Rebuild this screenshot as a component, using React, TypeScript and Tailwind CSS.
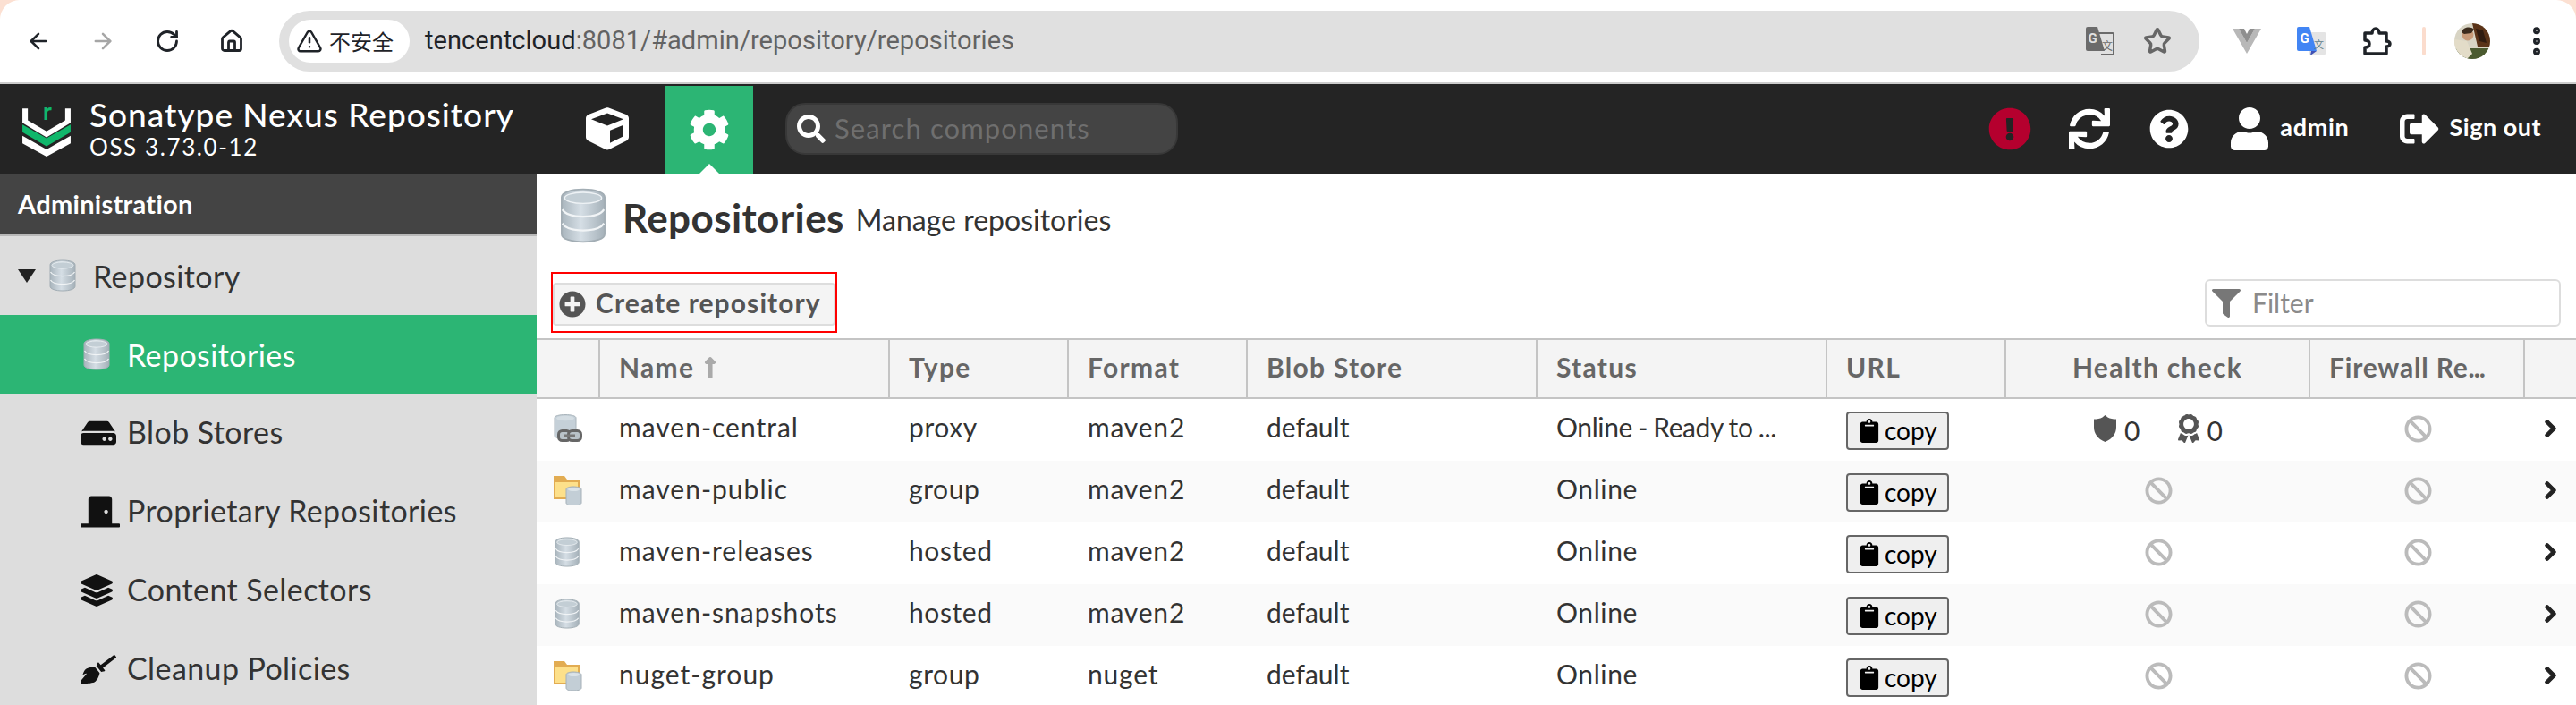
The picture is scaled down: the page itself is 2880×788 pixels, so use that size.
import { useId } from "react";
import { ArrowLeft, ArrowRight, RotateCw, House, TriangleAlert, Star, EllipsisVertical } from "lucide-react";
import {
  FaCube, FaCog, FaSearch, FaExclamationCircle, FaSync, FaQuestionCircle, FaUser, FaSignOutAlt,
  FaHdd, FaDoorClosed, FaLayerGroup, FaBroom, FaPlusCircle, FaFilter, FaLongArrowAltUp,
  FaClipboard, FaBan, FaChevronRight, FaAward,
} from "react-icons/fa";

function Db({ className }: { className?: string }) {
  const id = useId();
  return (
    <svg viewBox="0 0 30 36" className={className}>
      <defs>
        <linearGradient id={id} x1="0" x2="1" y1="0" y2="0">
          <stop offset="0" stopColor="#a9b5bd" />
          <stop offset="0.45" stopColor="#d5dee5" />
          <stop offset="1" stopColor="#a5b1b9" />
        </linearGradient>
      </defs>
      <path d="M1 6c0-3 6-5 14-5s14 2 14 5v24c0 3-6 5-14 5S1 33 1 30z" fill={`url(#${id})`} stroke="#a2adb4" strokeWidth="1" />
      <ellipse cx="15" cy="6.5" rx="12" ry="3.6" fill="#c3ced5" stroke="#eef2f5" strokeWidth="0.8" />
      <path d="M1.5 14c2 3.2 7 4.6 13.5 4.6s11.500-1.400 13.500-4.600" fill="none" stroke="#f1f4f6" strokeWidth="1.300" />
      <path d="M1.5 23c2 3.200 7 4.600 13.500 4.600s11.500-1.400 13.500-4.600" fill="none" stroke="#f1f4f6" strokeWidth="1.300" />
    </svg>
  );
}

function ProxyIcon() {
  return (
    <svg viewBox="0 0 32 32" className="w-[32px] h-[32px]">
      <path d="M1 4c0-2 5-3.500 12-3.500S25 2 25 4v20c0 2-5 3.500-12 3.500S1 26 1 24z" fill="#c5d0d8" stroke="#aab5bc" />
      <ellipse cx="13" cy="4.500" rx="10" ry="2.800" fill="#d4dde3" />
      <rect x="5.500" y="18.500" width="13" height="11" rx="4" fill="#b9c2c8" stroke="#666" strokeWidth="3" />
      <rect x="16.500" y="18.500" width="14" height="11" rx="4" fill="#b9c2c8" stroke="#666" strokeWidth="3" />
      <rect x="11" y="22.500" width="13" height="3" fill="#777" />
    </svg>
  );
}

function GroupIcon() {
  return (
    <svg viewBox="0 0 32 34" className="w-[32px] h-[34px]">
      <path d="M0 1h12l3 4h14v22H0z" fill="#e2ac52" />
      <path d="M2 8h25v17H2z" fill="#fde08a" />
      <path d="M14 16c0-2 4-3 8-3s9 1 9 3v15c0 2-4 3-9 3s-8-1-8-3z" fill="#c3ced6" stroke="#a5b0b8" />
      <ellipse cx="22.500" cy="16" rx="6.500" ry="2" fill="#dbe3e8" />
    </svg>
  );
}

function Shield() {
  return (
    <svg viewBox="0 0 25 30" className="w-[25px] h-[30px] -mt-[4px] text-[#555]">
      <path d="M12.500 0l3 2.500c2.500 1.500 6 2 9.500 2v9c0 7-4 13-12.500 16.500C4 26.500 0 20.500 0 13.500v-9c3.500 0 7-.5 9.500-2z" fill="currentColor" />
    </svg>
  );
}

function TranslateGray() {
  return (
    <svg viewBox="0 0 33 32" className="w-[33px] h-[32px]">
      <path d="M13 7h18a1 1 0 0 1 1 1v22a1 1 0 0 1-1 1H18" fill="#e0e0e0" stroke="#6b6b6b" strokeWidth="2" />
      <path d="M1 2a2 2 0 0 1 2-2h11l8 27H3a2 2 0 0 1-2-2z" fill="#6b6b6b" />
      <text x="3.500" y="18" fontSize="15" fontWeight="700" fill="#e0e0e0" fontFamily="Roboto, sans-serif">G</text>
      <text x="19" y="26" fontSize="12" fill="#6b6b6b" fontFamily="'Noto Sans CJK SC', sans-serif">文</text>
    </svg>
  );
}

function TranslateColor() {
  return (
    <svg viewBox="0 0 32 32" className="w-[32px] h-[32px]">
      <rect x="14" y="6" width="18" height="25" rx="1" fill="#e4e4e4" />
      <path d="M0 2a2 2 0 0 1 2-2h12l8 27H2a2 2 0 0 1-2-2z" fill="#4285f4" />
      <path d="M16 27h6l-7 5z" fill="#3f51b5" />
      <text x="3.500" y="18" fontSize="15" fontWeight="700" fill="#fff" fontFamily="Roboto, sans-serif">G</text>
      <text x="19" y="24" fontSize="11" fill="#5f7f8c" fontFamily="'Noto Sans CJK SC', sans-serif">文</text>
    </svg>
  );
}

function VueIcon() {
  return (
    <svg viewBox="0 0 32 28" className="w-[32px] h-[28px]">
      <path d="M0 0h7l9 16L25 0h7L16 28z" fill="#b8b8b8" />
      <path d="M7 0h6l3 6 3-6h6l-9 16z" fill="#8f8f8f" />
    </svg>
  );
}

function Puzzle() {
  return (
    <svg viewBox="0 0 32 32" className="w-[32px] h-[32px]" fill="none">
      <path d="M2 7h8c0-3 2-5 4-5s4 2 4 5h8v9c2 0 4 1 4 3s-2 3-4 3v8H2v-7c3 0 5-1 5-4s-2-4-5-4z" stroke="#1f2328" strokeWidth="3.500" strokeLinejoin="round" />
    </svg>
  );
}

function Avatar() {
  const id = useId();
  return (
    <svg viewBox="0 0 40 40" className="w-[40px] h-[40px]">
      <defs>
        <clipPath id={id}><circle cx="20" cy="20" r="20" /></clipPath>
      </defs>
      <g clipPath={`url(#${id})`}>
        <rect width="40" height="40" fill="#d8d4c4" />
        <path d="M20 0h20v26H26z" fill="#5a3318" />
        <path d="M0 28h40v12H0z" fill="#4b5a30" />
        <path d="M0 18l14 2 6 14-6 6H0z" fill="#e3dcc8" />
        <circle cx="15" cy="13" r="6.500" fill="#c79a78" />
        <path d="M8 10c2-6 10-7 14-3l-3 4-8 1z" fill="#3b2a1c" />
        <path d="M24 6l8 2 4 14-8-2z" fill="#2f1c10" />
      </g>
    </svg>
  );
}

function NexusLogo() {
  return (
    <svg viewBox="30 10 160 202" className="w-[54px] h-[68px] shrink-0 -mt-[7px]">
      <path d="M30 52h18v40l62 36 62-36V52h18v48l-80 48-80-48z" fill="#fff" />
      <path d="M30 106l80 45 80-45v25l-80 47-80-47z" fill="#10b76b" />
      <path d="M30 143l80 45 80-45v25l-80 44-80-44z" fill="#fff" />
      <text x="98" y="90" fontSize="78" fontWeight="700" fill="#10b76b" fontFamily="Lato, sans-serif">r</text>
    </svg>
  );
}

const navItems = [
  { label: "Blob Stores", icon: <FaHdd className="w-[40px] h-[36px]" /> },
  { label: "Proprietary Repositories", icon: <FaDoorClosed className="w-[44px] h-[38px]" /> },
  { label: "Content Selectors", icon: <FaLayerGroup className="w-[36px] h-[36px]" /> },
  { label: "Cleanup Policies", icon: <FaBroom className="w-[40px] h-[38px]" /> },
];

const rows = [
  { name: "maven-central", type: "proxy", format: "maven2", status: "Online - Ready to ...", kind: "proxy" },
  { name: "maven-public", type: "group", format: "maven2", status: "Online", kind: "group" },
  { name: "maven-releases", type: "hosted", format: "maven2", status: "Online", kind: "hosted" },
  { name: "maven-snapshots", type: "hosted", format: "maven2", status: "Online", kind: "hosted" },
  { name: "nuget-group", type: "group", format: "nuget", status: "Online", kind: "group" },
];

const cols = "grid grid-cols-[71px_324px_200px_200px_324px_324px_200px_340px_240px_57px]";

function Head({ children, center }: { children?: React.ReactNode; center?: boolean }) {
  return (
    <div className={`flex items-center border-r-2 border-[#c4c4c4] pb-[3px] text-[30px] font-bold text-[#666] tracking-[1.300px] ${center ? "justify-center" : "pl-[21px]"}`}>
      {children}
    </div>
  );
}

export default function App() {
  return (
    <div className="w-[2880px] h-[788px] overflow-hidden bg-[#fce0d2] font-[Lato,sans-serif]">
      {/* Browser chrome */}
      <div className="h-[92px] bg-white rounded-t-[22px] flex items-center pl-[29px]">
        <ArrowLeft className="w-[28px] h-[28px] text-[#1f2328]" strokeWidth={2.200} />
        <ArrowRight className="w-[28px] h-[28px] ml-[44px] text-[#a6a6a6]" strokeWidth={2.200} />
        <RotateCw className="w-[28px] h-[28px] ml-[44px] text-[#1f2328]" strokeWidth={2.400} />
        <House className="w-[28px] h-[28px] ml-[44px] text-[#1f2328]" strokeWidth={2.400} />
        <div className="ml-[39px] w-[2147px] h-[68px] rounded-full bg-[#e0e0e0] flex items-center pl-[11px] pr-[31px]">
          <div className="w-[135px] h-[48px] rounded-full bg-white flex items-center pl-[8px] gap-[7px] font-['Noto_Sans_CJK_SC',sans-serif] text-[24px] text-[#1f2328] shrink-0">
            <TriangleAlert className="w-[30px] h-[30px] shrink-0" strokeWidth={2} />
            <span>不安全</span>
          </div>
          <div className="ml-[17px] font-[Roboto,sans-serif] text-[29px] text-[#636363] tracking-[0.05px]">
            <span className="text-[#1f2328]">tencentcloud</span>:8081/#admin/repository/repositories
          </div>
          <div className="flex-1" />
          <TranslateGray />
          <Star className="ml-[32px] w-[32px] h-[32px] text-[#666]" strokeWidth={2.600} />
        </div>
        <div className="ml-[37px]"><VueIcon /></div>
        <div className="ml-[40px]"><TranslateColor /></div>
        <div className="ml-[42px]"><Puzzle /></div>
        <div className="ml-[34px] w-[4px] h-[32px] rounded-full bg-[#fbdccd]" />
        <div className="ml-[32px]"><Avatar /></div>
        <EllipsisVertical className="ml-[32px] w-[40px] h-[40px] text-[#1f2328]" strokeWidth={2.800} />
      </div>
      <div className="h-[2px] bg-[#cccccc]" />

      {/* Nexus header */}
      <div className="h-[100px] bg-[#242424] flex items-center pl-[25px] text-white">
        <NexusLogo />
        <div className="ml-[21px] w-[555px] flex flex-col leading-none -mt-[2px]">
          <div className="text-[37px] font-medium leading-[42px] tracking-[1px]">Sonatype Nexus Repository</div>
          <div className="text-[26px] leading-[30px] tracking-[1.600px]">OSS 3.73.0-12</div>
        </div>
        <FaCube className="w-[48px] h-[48px]" />
        <div className="relative ml-[41px] w-[98px] h-[98px] mt-[2px] bg-[#2cb574] flex items-center justify-center">
          <FaCog className="w-[46px] h-[46px]" />
          <div className="absolute bottom-0 left-1/2 -translate-x-1/2 w-0 h-0 border-x-[11px] border-x-transparent border-b-[11px] border-b-white" />
        </div>
        <div className="ml-[36px] w-[439px] h-[58px] rounded-[22px] bg-[#444444] border-2 border-[#383838] flex items-center pl-[11px]">
          <FaSearch className="w-[32px] h-[32px]" />
          <span className="ml-[10px] text-[31px] text-[#6f6f6f] tracking-[1.100px] -mt-[2px]">Search components</span>
        </div>
        <div className="flex-1" />
        <FaExclamationCircle className="w-[48px] h-[48px] text-[#b5002e]" />
        <FaSync className="ml-[42px] w-[46px] h-[46px]" />
        <FaQuestionCircle className="ml-[44px] w-[44px] h-[44px]" />
        <FaUser className="ml-[47px] w-[42px] h-[48px]" />
        <span className="ml-[13px] text-[27px] font-bold tracking-[0.7px] -mt-[3px]">admin</span>
        <FaSignOutAlt className="ml-[56px] w-[44px] h-[44px]" />
        <span className="ml-[12px] mr-[39px] text-[27px] font-bold tracking-[0.5px] -mt-[3px]">Sign out</span>
      </div>

      <div className="flex h-[594px]">
        {/* Sidebar */}
        <div className="w-[600px] shrink-0 bg-[#dddddd] text-[#333]">
          <div className="h-[70px] bg-[#444444] border-b-2 border-[#b8b8b8] flex items-center pl-[20px] text-[29px] font-bold text-white tracking-[0.3px]">
            Administration
          </div>
          <div className="h-[88px] flex items-center pl-[20px] text-[34px] tracking-[0.4px]">
            <div className="w-0 h-0 border-x-[10px] border-x-transparent border-t-[15px] border-t-[#222]" />
            <Db className="ml-[15px] w-[30px] h-[36px]" />
            <span className="ml-[19px]">Repository</span>
          </div>
          <div className="h-[88px] flex items-center pl-[93px] bg-[#2cb574] text-white text-[34px] tracking-[0.4px]">
            <Db className="w-[30px] h-[36px]" />
            <span className="ml-[19px]">Repositories</span>
          </div>
          {navItems.map((n) => (
            <div key={n.label} className="h-[88px] flex items-center pl-[90px] text-[34px] tracking-[0.4px]">
              <div className="w-[46px] flex justify-start text-[#111]">{n.icon}</div>
              <span className="ml-[6px] -mt-[3px]">{n.label}</span>
            </div>
          ))}
        </div>

        {/* Main */}
        <div className="flex-1 min-w-0 bg-white">
          <div className="h-[84px] flex items-center pl-[26px] pt-[10px]">
            <Db className="w-[52px] h-[62px]" />
            <span className="ml-[18px] mt-[3px] text-[44px] font-bold text-[#333] tracking-[0.4px]">Repositories</span>
            <span className="ml-[13px] mt-[10px] text-[32px] text-[#333]">Manage repositories</span>
          </div>
          <div className="h-[100px] flex items-start pt-[26px] pl-[16px] relative">
            <div className="w-[320px] h-[68px] border-2 border-[#ff0000] flex items-end pb-[6px] justify-center">
              <div className="w-[316px] h-[48px] bg-[#f4f4f4] border-2 border-[#dddddd] rounded-[4px] flex items-center pl-[5px] text-[#555]">
                <FaPlusCircle className="w-[30px] h-[30px]" />
                <span className="ml-[11px] text-[30px] font-bold tracking-[1.100px] -mt-[4px]">Create repository</span>
              </div>
            </div>
            <div className="ml-[1529px] mt-[8px] w-[398px] h-[53px] border-2 border-[#dddddd] rounded-[6px] flex items-center pl-[6px]">
              <FaFilter className="w-[32px] h-[32px] text-[#777]" />
              <span className="ml-[13px] text-[30px] text-[#8a8a8a]">Filter</span>
            </div>
          </div>

          {/* Table */}
          <div className={`${cols} h-[68px] bg-[#f4f4f4] border-y-2 border-[#c4c4c4]`}>
            <Head />
            <Head>Name<FaLongArrowAltUp className="ml-[6px] w-[24px] h-[26px] text-[#aaaaaa] stroke-[20]" /></Head>
            <Head>Type</Head>
            <Head>Format</Head>
            <Head>Blob Store</Head>
            <Head>Status</Head>
            <Head>URL</Head>
            <Head center>Health check</Head>
            <Head>
              <span className="tracking-[0.8px]">Firewall Re</span>
              <span className="tracking-[-1px]">...</span>
            </Head>
            <div />
          </div>
          {rows.map((r, i) => (
            <div key={r.name} className={`${cols} h-[69px] text-[30px] text-[#333] ${i % 2 === 1 ? "bg-[#fafafa]" : "bg-white"}`}>
              <div className="flex items-center pl-[19px] pb-[3px]">
                {r.kind === "proxy" ? <ProxyIcon /> : r.kind === "group" ? <GroupIcon /> : <Db className="w-[30px] h-[34px]" />}
              </div>
              <div className="flex items-center pl-[21px] pb-[6px] tracking-[1px]">{r.name}</div>
              <div className="flex items-center pl-[21px] pb-[6px] tracking-[0.6px]">{r.type}</div>
              <div className="flex items-center pl-[21px] pb-[6px] tracking-[0.8px]">{r.format}</div>
              <div className="flex items-center pl-[21px] pb-[6px]">default</div>
              <div className={`flex items-center pl-[21px] pb-[6px] ${i === 0 ? "tracking-[-0.4px] [word-spacing:-1px]" : "tracking-[0.6px]"}`}>{r.status}</div>
              <div className="flex items-center pl-[21px]">
                <div className="w-[115px] h-[43px] bg-[#efefef] border-2 border-[#666] rounded-[4px] flex items-center pl-[13px] text-[28px] text-black mt-[1px]">
                  <FaClipboard className="w-[22px] h-[27px]" />
                  <span className="ml-[6px] leading-none">copy</span>
                </div>
              </div>
              <div className="flex items-center justify-center">
                {i === 0 ? (
                  <div className="flex items-center text-[30px] text-[#333]">
                    <Shield />
                    <span className="ml-[9px] mt-[2px]">0</span>
                    <FaAward className="ml-[42px] w-[24px] h-[32px] text-[#555] -mt-[4px]" />
                    <span className="ml-[9px] mt-[2px]">0</span>
                  </div>
                ) : (
                  <FaBan className="w-[31px] h-[31px] text-[#bbbbbb] -mt-[3px]" />
                )}
              </div>
              <div className="flex items-center justify-center">
                <FaBan className="w-[31px] h-[31px] text-[#bbbbbb] -mt-[3px]" />
              </div>
              <div className="flex items-center pl-[21px] pb-[3px]">
                <FaChevronRight className="w-[15px] h-[22px] text-[#222] stroke-[30]" />
              </div>
            </div>
          ))}
        </div>
      </div>
    </div>
  );
}
